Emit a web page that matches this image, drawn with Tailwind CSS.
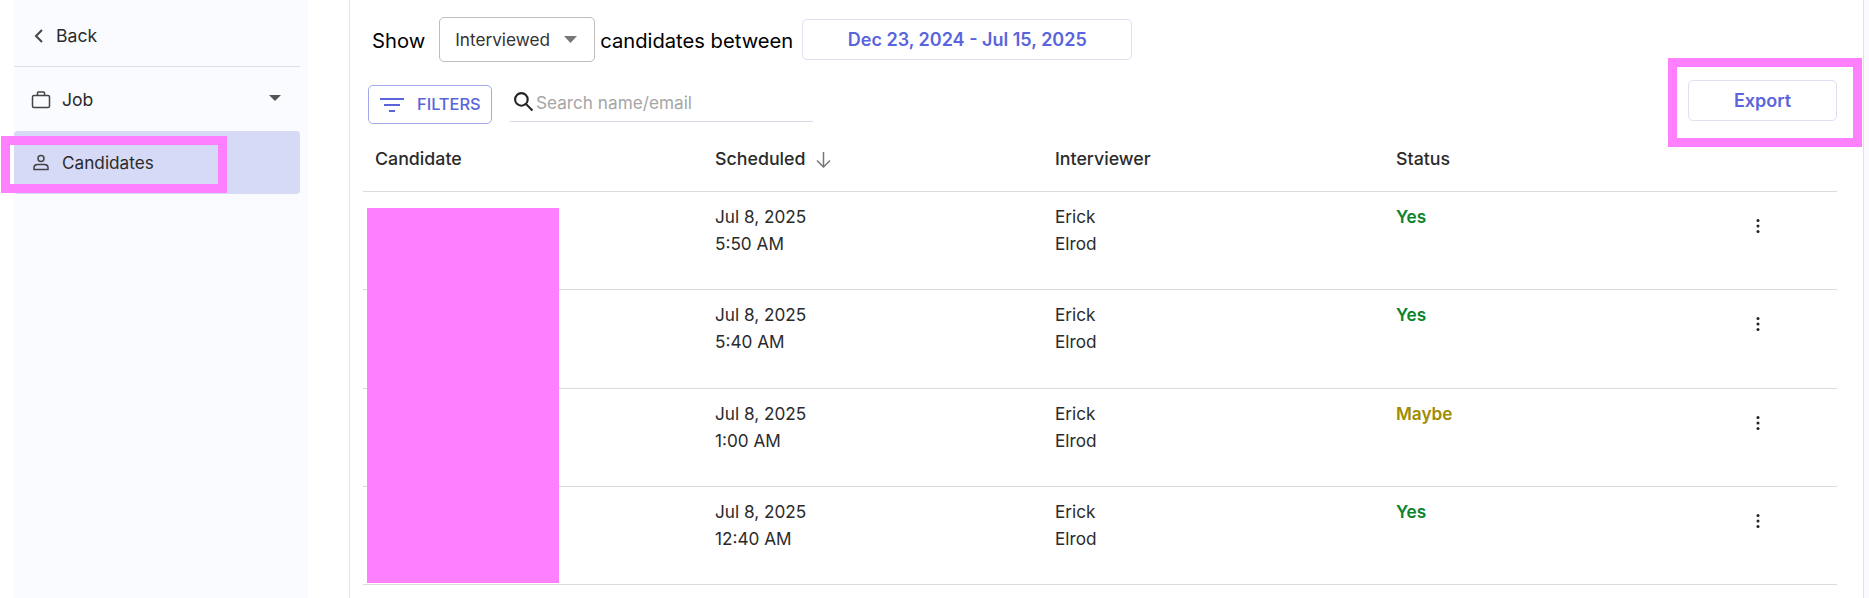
<!DOCTYPE html>
<html lang="en">
<head>
    <meta charset="UTF-8">
    <title>Candidates</title>
    <script src="https://cdn.jsdelivr.net/npm/@tailwindcss/browser@4"></script>
</head>
<body class="bg-white h-[598px] overflow-hidden font-['Inter','Liberation_Sans',sans-serif] text-[17.2px] text-[#2b2b2b]">
<div class="relative flex h-[598px] w-[1869px]">

    <!-- sidebar -->
    <aside class="ml-[14px] w-[294px] h-full bg-[#fafbff] shrink-0">
        <div class="w-[286px]">
            <a class="flex items-center h-[67px] border-b border-[#dcdde8] pl-[19px] pt-[6px]">
                <svg width="12" height="16" viewBox="0 0 12 16" fill="none" stroke="#444" stroke-width="2"><path d="M9 2 L3 8 L9 14"/></svg>
                <span class="ml-[11px] text-[17.6px]">Back</span>
            </a>
            <div class="flex items-center h-[64px] pl-[17px] pr-[19px] pt-[2px]">
                <svg width="20" height="20" viewBox="0 0 20 20" fill="none" stroke="#444" stroke-width="1.5"><rect x="1.5" y="5.5" width="17" height="12" rx="1.5"/><path d="M6.5 5.5 V2.8 Q6.5 2 7.3 2 H12.7 Q13.5 2 13.5 2.8 V5.5"/></svg>
                <span class="ml-[11px] text-[17.6px]">Job</span>
                <svg class="ml-auto mb-[4px]" width="12" height="6" viewBox="0 0 12 6" fill="#555"><path d="M0 0 H12 L6 6 Z"/></svg>
            </div>
            <a class="flex items-center h-[63px] bg-[#d6daf7] rounded-[4px] pl-[19px]">
                <svg width="16" height="17" viewBox="0 0 16 17" fill="none" stroke="#444" stroke-width="1.5"><circle cx="8" cy="4.5" r="3"/><path d="M1 15.5 V13.5 Q1 10.8 4.5 10.5 H11.5 Q15 10.8 15 13.5 V15.5 Z"/></svg>
                <span class="ml-[13px]">Candidates</span>
            </a>
        </div>
    </aside>

    <!-- main -->
    <main class="ml-[41px] w-[1515px] h-full border-x border-[#dfe1f0] pl-[13px] pr-[26px] shrink-0">
        <div class="flex items-center h-[45px] mt-[17px] text-[20.2px] text-black">
            <span class="ml-[9px] pt-[3px]">Show</span>
            <div class="ml-[14px] flex items-center w-[156px] h-[45px] border border-[#bdbdbd] rounded-[5px] pl-[15px] text-[17.2px] text-[#333] shrink-0">
                Interviewed
                <svg class="ml-[14px]" width="13" height="7" viewBox="0 0 13 7" fill="#777"><path d="M0 0 H13 L6.5 7 Z"/></svg>
            </div>
            <span class="ml-[5px] pt-[3px]">candidates between</span>
            <button class="ml-[9px] w-[330px] h-[41px] border border-[#e0e0f2] rounded-[5px] text-[18px] font-semibold text-[#5a64dc]">Dec 23, 2024 - Jul 15, 2025</button>
        </div>

        <div class="flex items-start h-[44px] mt-[18px]">
            <button class="flex items-center mt-[5px] ml-[5px] w-[124px] h-[39px] border border-[#a3a8ea] rounded-[5px] pl-[11px] text-[16.4px] font-medium text-[#5a64dc]">
                <svg width="24" height="16" viewBox="0 0 24 16" fill="#5a64dc"><rect x="0" y="1" width="24" height="2"/><rect x="4" y="7" width="16" height="2"/><rect x="9" y="13" width="6" height="2"/></svg>
                <span class="ml-[13px]">FILTERS</span>
            </button>
            <div class="flex items-center ml-[18px] w-[303px] h-[42px] border-b border-[#d9d9e3] pl-[3px] pt-[4px] text-[#a6a6a6]">
                <svg class="mb-[3px]" width="21" height="21" viewBox="0 0 20 20" fill="none" stroke="#222" stroke-width="2"><circle cx="8" cy="8" r="6"/><path d="M12.5 12.5 L18.5 18.5"/></svg>
                <span class="ml-[2px]">Search name/email</span>
            </div>
            <button class="ml-auto w-[149px] h-[41px] border border-[#e0e0f2] rounded-[5px] text-[18px] font-semibold text-[#5a64dc]">Export</button>
        </div>

        <!-- table -->
        <div class="mt-[7px]">
            <div class="grid grid-cols-[340px_340px_341px_1fr] items-center h-[61px] border-b border-[#dcdce0] pl-[12px] pb-[3px] text-[17.8px]">
                <div class="font-medium">Candidate</div>
                <div class="flex items-center font-medium">Scheduled
                    <svg class="ml-[9px]" width="17" height="17" viewBox="0 0 17 17" fill="none" stroke="#777" stroke-width="1.5"><path d="M8.5 1 V16 M2 9.5 L8.5 16 L15 9.5"/></svg>
                </div>
                <div class="font-medium">Interviewer</div>
                <div class="font-medium">Status</div>
            </div>

            <div class="grid grid-cols-[340px_340px_341px_360px_1fr] h-[98.3px] border-b border-[#dcdce0] pl-[12px] pt-[11px] leading-[27px]">
                <div></div>
                <div>Jul 8, 2025<br>5:50 AM</div>
                <div>Erick<br>Elrod</div>
                <div class="font-semibold text-[#0a842c]">Yes</div>
                <div class="pt-[15px]"><svg width="4" height="16" viewBox="0 0 4 16" fill="#222"><circle cx="2" cy="2.5" r="1.5"/><circle cx="2" cy="8" r="1.5"/><circle cx="2" cy="13.5" r="1.5"/></svg></div>
            </div>
            <div class="grid grid-cols-[340px_340px_341px_360px_1fr] h-[98.3px] border-b border-[#dcdce0] pl-[12px] pt-[11px] leading-[27px]">
                <div></div>
                <div>Jul 8, 2025<br>5:40 AM</div>
                <div>Erick<br>Elrod</div>
                <div class="font-semibold text-[#0a842c]">Yes</div>
                <div class="pt-[15px]"><svg width="4" height="16" viewBox="0 0 4 16" fill="#222"><circle cx="2" cy="2.5" r="1.5"/><circle cx="2" cy="8" r="1.5"/><circle cx="2" cy="13.5" r="1.5"/></svg></div>
            </div>
            <div class="grid grid-cols-[340px_340px_341px_360px_1fr] h-[98.3px] border-b border-[#dcdce0] pl-[12px] pt-[11px] leading-[27px]">
                <div></div>
                <div>Jul 8, 2025<br>1:00 AM</div>
                <div>Erick<br>Elrod</div>
                <div class="font-semibold text-[#a08c00]">Maybe</div>
                <div class="pt-[15px]"><svg width="4" height="16" viewBox="0 0 4 16" fill="#222"><circle cx="2" cy="2.5" r="1.5"/><circle cx="2" cy="8" r="1.5"/><circle cx="2" cy="13.5" r="1.5"/></svg></div>
            </div>
            <div class="grid grid-cols-[340px_340px_341px_360px_1fr] h-[98.3px] border-b border-[#dcdce0] pl-[12px] pt-[11px] leading-[27px]">
                <div></div>
                <div>Jul 8, 2025<br>12:40 AM</div>
                <div>Erick<br>Elrod</div>
                <div class="font-semibold text-[#0a842c]">Yes</div>
                <div class="pt-[15px]"><svg width="4" height="16" viewBox="0 0 4 16" fill="#222"><circle cx="2" cy="2.5" r="1.5"/><circle cx="2" cy="8" r="1.5"/><circle cx="2" cy="13.5" r="1.5"/></svg></div>
            </div>
        </div>
    </main>
    <div class="flex-1 bg-[#fafbff]"></div>

    <!-- redaction marks lying over the screenshot -->
    <div class="absolute left-[1px] top-[136px] w-[226px] h-[57px] border-[9px] border-[#ff80ff]"></div>
    <div class="absolute left-[1668px] top-[58px] w-[194px] h-[89px] border-[9px] border-[#ff80ff]"></div>
    <div class="absolute left-[367px] top-[208px] w-[192px] h-[375px] bg-[#ff80ff]"></div>
</div>
</body>
</html>
